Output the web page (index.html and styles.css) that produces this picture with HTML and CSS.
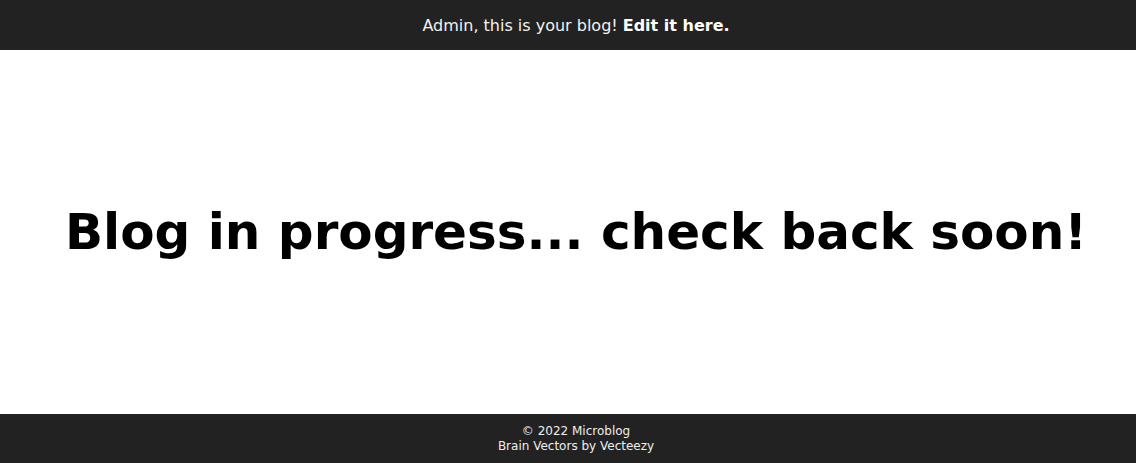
FILE: index.html
```html
<!DOCTYPE html>
<html>
<head>
<meta charset="utf-8">
<link rel="stylesheet" href="styles.css">
</head>
<body>
<div class="page">
  <header class="topbar">Admin, this is your blog! <a class="edit" href="#">Edit it here.</a></header>
  <main class="main">
    <h1 class="title">Blog in progress... check back soon!</h1>
  </main>
  <footer class="footer">
    <div>© 2022 Microblog</div>
    <div>Brain Vectors by Vecteezy</div>
  </footer>
</div>
</body>
</html>
```

FILE: styles.css
```css
html, body {
  margin: 0;
  padding: 0;
  height: 100%;
}
body {
  font-family: "DejaVu Sans", sans-serif;
  background: #fff;
}
.page {
  display: flex;
  flex-direction: column;
  height: 100vh;
}
.topbar {
  background: #222222;
  color: #f2f2f2;
  height: 50px;
  padding-left: 16px;
  display: flex;
  align-items: center;
  justify-content: center;
  gap: 5px;
  font-size: 16px;
  flex-shrink: 0;
}
.edit {
  color: #fff;
  font-weight: bold;
  text-decoration: none;
}
.main {
  flex: 1;
  display: flex;
  align-items: center;
  justify-content: center;
  padding-left: 16px;
}
.title {
  margin: 0;
  font-size: 50px;
  font-weight: bold;
  color: #000;
}
.footer {
  background: #222222;
  color: #eeeeee;
  height: 49px;
  padding-left: 16px;
  display: flex;
  flex-direction: column;
  align-items: center;
  justify-content: center;
  font-size: 12px;
  line-height: 15px;
  flex-shrink: 0;
}
```
